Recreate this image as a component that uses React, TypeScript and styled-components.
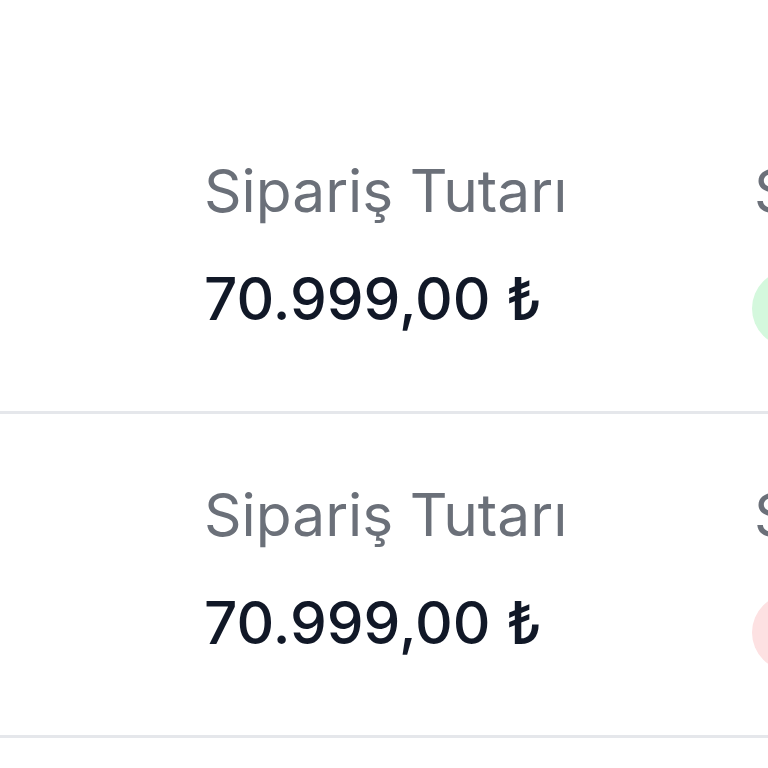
import styled, { createGlobalStyle } from "styled-components";

const GlobalStyle = createGlobalStyle`
    html, body {
        margin: 0;
        padding: 0;
        background: #ffffff;
        overflow: hidden;
    }
    body {
        font-family: Inter, "Noto Sans", "Liberation Sans", sans-serif;
    }
`;

type Order = {
    id: number;
    total: string;
    status: "success" | "failed";
};

const orders: Order[] = [
    { id: 1, total: "70.999,00 ₺", status: "success" },
    { id: 2, total: "70.999,00 ₺", status: "failed" },
];

const App = () => {
    return (
        <>
            <GlobalStyle />
            <List>
                {orders.map((order) => (
                    <Row key={order.id}>
                        <Column>
                            <Label>Sipariş Tutarı</Label>
                            <Value>{order.total}</Value>
                        </Column>
                        <StatusColumn>
                            <Label>Sipariş Durumu</Label>
                            <StatusDot $status={order.status} />
                        </StatusColumn>
                    </Row>
                ))}
            </List>
        </>
    );
};

export default App;

const List = styled.div`
    padding-top: 90px;
    width: 768px;
    overflow: hidden;
`;

const Row = styled.div`
    display: flex;
    padding: 66px 0 64px 204px;
    border-bottom: 3px solid #e5e7eb;
    white-space: nowrap;
`;

const Column = styled.div`
    display: flex;
    flex-direction: column;
    gap: 36px;
    width: 550px;
    flex-shrink: 0;
`;

const StatusColumn = styled.div`
    display: flex;
    flex-direction: column;
    gap: 44px;
    flex-shrink: 0;
`;

const Label = styled.div`
    font-size: 58.6px;
    line-height: 70px;
    font-weight: 400;
    color: #6b7079;
`;

const Value = styled.div`
    font-size: 58.5px;
    line-height: 73px;
    font-weight: 500;
    color: #111827;
`;

const StatusDot = styled.div<{ $status: "success" | "failed" }>`
    width: 77px;
    height: 77px;
    border-radius: 50%;
    margin-left: -2px;
    background: ${(p) => (p.$status === "success" ? "#d4f8dd" : "#fde1e2")};
`;
